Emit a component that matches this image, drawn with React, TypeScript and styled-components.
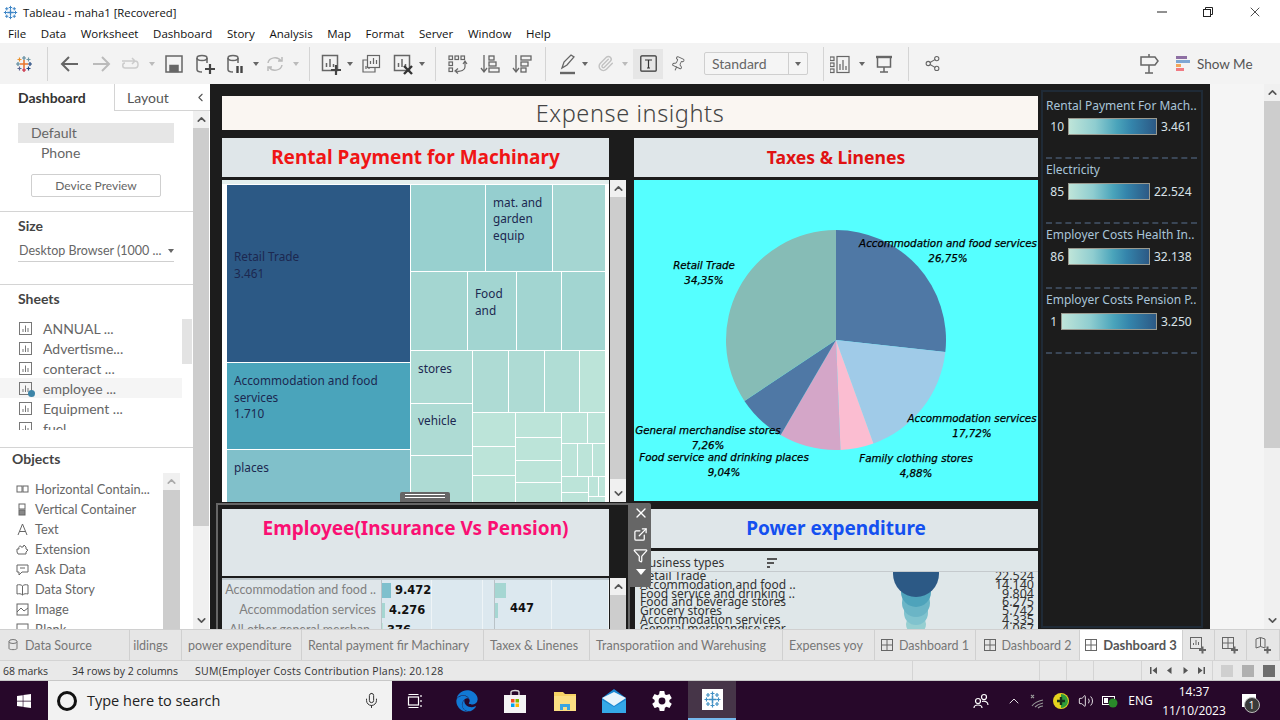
import React from "react";
import styled, { createGlobalStyle } from "styled-components";
import { FaEdge, FaWindows } from "react-icons/fa";
import { IoSettingsSharp } from "react-icons/io5";
import { ChevronUp, ChevronDown, ChevronLeft, ExternalLink, Filter, Mic, Paperclip, Pin, Share2, Volume2, X } from "lucide-react";

const UI = `"Lato", "Noto Sans", sans-serif`;
const SEGOE = `"Open Sans", "Noto Sans", sans-serif`;
const DASH = `"Noto Sans", "Open Sans", sans-serif`;

const Global = createGlobalStyle`
  html, body { margin: 0; padding: 0; background: #fff; }
  * { box-sizing: border-box; }
`;

const Page = styled.div`
  width: 1280px;
  height: 720px;
  display: flex;
  flex-direction: column;
  overflow: hidden;
  font-family: ${UI};
  color: #555;
`;

/* window chrome */
const TitleBar = styled.div`
  height: 24px;
  display: flex;
  align-items: center;
  background: #fff;
  font-family: ${SEGOE};
  font-size: 11.3px;
  color: #111;
  padding-left: 3px;
  gap: 5px;
`;
const WinButtons = styled.div`
  margin-left: auto;
  display: flex;
  height: 100%;
`;
const WinButton = styled.div<{ $w: number }>`
  width: ${(p) => p.$w}px;
  display: flex;
  align-items: center;
  justify-content: center;
  color: #222;
`;
const MenuBar = styled.div`
  height: 19px;
  display: flex;
  align-items: center;
  gap: 14.6px;
  padding-left: 8px;
  font-family: ${SEGOE};
  font-size: 11.5px;
  color: #111;
  background: #fff;
`;

/* toolbar */
const Toolbar = styled.div`
  height: 41px;
  display: flex;
  align-items: center;
  background: #f3f3f3;
`;
const Slot = styled.div<{ $w: number; $c?: string }>`
  flex: none;
  width: ${(p) => p.$w}px;
  height: 100%;
  display: flex;
  align-items: center;
  justify-content: center;
  color: ${(p) => p.$c || "#666"};
`;
const Sep = styled.div<{ $l?: number; $r?: number }>`
  flex: none;
  width: 1px;
  height: 34px;
  background: #d4d4d4;
  margin: 0 ${(p) => p.$r ?? 6}px 0 ${(p) => p.$l ?? 0}px;
`;
const Caret = styled.span<{ $c?: string; $s?: number }>`
  flex: none;
  width: 0;
  height: 0;
  border-left: ${(p) => p.$s ?? 3}px solid transparent;
  border-right: ${(p) => p.$s ?? 3}px solid transparent;
  border-top: ${(p) => (p.$s ?? 3) + 1}px solid ${(p) => p.$c || "#666"};
`;
const TBox = styled.div`
  flex: none;
  width: 30px;
  height: 30px;
  margin-left: 5px;
  background: #e6e6e6;
  display: flex;
  align-items: center;
  justify-content: center;
`;
const FitSelect = styled.div`
  flex: none;
  width: 104px;
  height: 23px;
  margin-left: 11px;
  display: flex;
  align-items: center;
  border: 1px solid #cfcfcf;
  border-radius: 2px;
  background: #f5f5f5;
  padding-left: 7px;
  font-size: 14px;
  color: #666;
`;
const FitCaret = styled.div`
  margin-left: auto;
  width: 19px;
  height: 100%;
  border-left: 1px solid #cfcfcf;
  display: flex;
  align-items: center;
  justify-content: center;
`;
const ShowMe = styled.div`
  display: flex;
  align-items: center;
  gap: 7px;
  margin-left: 16px;
  font-size: 13.5px;
  color: #555;
`;
const ShowBars = styled.div`
  display: flex;
  flex-direction: column;
  gap: 1px;
`;
const ShowBar = styled.div<{ $w: number; $c: string }>`
  height: 3px;
  width: ${(p) => p.$w}px;
  background: ${(p) => p.$c};
`;

/* main */
const Main = styled.div`
  height: 545px;
  display: flex;
  overflow: hidden;
`;
const Pane = styled.div`
  flex: none;
  width: 210px;
  background: #fff;
  display: flex;
  flex-direction: column;
`;
const PaneTabs = styled.div`
  height: 27px;
  flex: none;
  display: flex;
`;
const PaneTab = styled.div<{ $w: number; $active?: boolean }>`
  width: ${(p) => p.$w}px;
  display: flex;
  align-items: center;
  padding-left: ${(p) => (p.$active ? 18 : 12)}px;
  font-size: 14px;
  font-weight: ${(p) => (p.$active ? 700 : 400)};
  color: ${(p) => (p.$active ? "#333" : "#555")};
  border-left: ${(p) => (p.$active ? "none" : "1px solid #d4d4d4")};
  border-bottom: ${(p) => (p.$active ? "none" : "1px solid #d4d4d4")};
  gap: 25px;
`;
const PaneBody = styled.div`
  flex: 1;
  min-height: 0;
  display: flex;
`;
const PaneContent = styled.div`
  width: 193px;
  flex: none;
  display: flex;
  flex-direction: column;
`;
const Section = styled.div<{ $h: number }>`
  flex: none;
  height: ${(p) => p.$h}px;
  border-bottom: 1px solid #d4d4d4;
  overflow: hidden;
`;
const LastSection = styled(Section)`
  border-bottom: none;
`;
const Heading = styled.div<{ $left?: number; $top?: number }>`
  font-size: 14px;
  font-weight: 700;
  color: #444;
  line-height: 18px;
  padding: ${(p) => p.$top ?? 5}px 0 0 ${(p) => p.$left ?? 18}px;
`;
const DeviceList = styled.div`
  padding-top: 12px;
`;
const DeviceRow = styled.div<{ $on?: boolean; $indent: number }>`
  height: 20px;
  margin: 0 19px 0 18px;
  padding-left: ${(p) => p.$indent}px;
  line-height: 20px;
  font-size: 14px;
  color: #666;
  background: ${(p) => (p.$on ? "#e6e6e6" : "transparent")};
`;
const DeviceButton = styled.div`
  width: 130px;
  height: 23px;
  margin: 11px 0 0 31px;
  padding-bottom: 1px;
  border: 1px solid #cfcfcf;
  border-radius: 2px;
  font-size: 12px;
  color: #666;
  display: flex;
  align-items: center;
  justify-content: center;
`;
const SizeSelect = styled.div`
  width: 156px;
  height: 22px;
  margin: 5px 0 0 18px;
  padding-left: 1px;
  border-bottom: 1px solid #cfcfcf;
  display: flex;
  align-items: center;
  justify-content: space-between;
  font-size: 12.5px;
  white-space: nowrap;
  color: #666;
`;
const ListWrap = styled.div<{ $h: number; $m: number }>`
  height: ${(p) => p.$h}px;
  margin-top: ${(p) => p.$m}px;
  display: flex;
  overflow: hidden;
`;
const SheetList = styled.div`
  width: 182px;
`;
const SheetRow = styled.div<{ $on?: boolean }>`
  height: 20px;
  display: flex;
  align-items: center;
  padding-left: 19px;
  gap: 11px;
  font-size: 14px;
  color: #666;
  background: ${(p) => (p.$on ? "#f5f5f5" : "transparent")};
`;
const SheetThumb = styled.div`
  width: 10px;
  height: 45px;
  margin-top: 1px;
  background: #e3e3e3;
`;
const IconWrap = styled.span`
  position: relative;
  display: flex;
`;
const Check = styled.span`
  position: absolute;
  right: -3px;
  bottom: -2px;
  width: 7px;
  height: 7px;
  border-radius: 50%;
  background: #3d85a8;
`;
const ObjList = styled.div`
  width: 163px;
  padding-top: 6px;
`;
const ObjRow = styled.div`
  height: 20px;
  display: flex;
  align-items: center;
  padding-left: 16px;
  gap: 6px;
  font-size: 12.8px;
  color: #666;
  white-space: nowrap;
`;

const Track = styled.div<{ $w?: number }>`
  flex: none;
  width: ${(p) => p.$w ?? 16}px;
  height: 100%;
  display: flex;
  flex-direction: column;
  background: #f0f0f0;
`;
const Arrow = styled.div<{ $c?: string }>`
  flex: none;
  height: 17px;
  display: flex;
  align-items: center;
  justify-content: center;
  color: ${(p) => p.$c || "#555"};
`;
const Thumb = styled.div<{ $h: number }>`
  flex: none;
  height: ${(p) => p.$h}px;
  background: #cdcdcd;
`;
const TrackFill = styled.div`
  flex: 1;
`;

const Scroll = ({ thumb, width, faded, noDown }: { thumb: number; width?: number; faded?: boolean; noDown?: boolean }) => (
  <Track $w={width}>
    <Arrow $c={faded ? "#aaa" : "#555"}>
      <ChevronUp size={13} strokeWidth={3} />
    </Arrow>
    <Thumb $h={thumb} />
    <TrackFill />
    {!noDown && (
      <Arrow>
        <ChevronDown size={13} strokeWidth={3} />
      </Arrow>
    )}
  </Track>
);

/* dashboard canvas */
const Canvas = styled.div`
  flex: none;
  width: 1000px;
  height: 100%;
  background: #1c1c1c;
  display: flex;
  padding-left: 12px;
`;
const Board = styled.div`
  flex: none;
  width: 816px;
  padding-top: 12px;
  display: flex;
  flex-direction: column;
  gap: 8px;
`;
const BoardTitle = styled.div`
  flex: none;
  height: 34px;
  padding-bottom: 1px;
  background: #faf6f2;
  display: flex;
  align-items: center;
  justify-content: center;
  font-family: ${DASH};
  font-size: 23.5px;
  font-weight: 300;
  letter-spacing: 0.6px;
  color: #444;
`;
const BoardColumns = styled.div`
  display: grid;
  grid-template-columns: 404px 404px;
  column-gap: 8px;
`;
const Col = styled.div`
  display: flex;
  flex-direction: column;
`;
const CardTitle = styled.div<{ $c: string; $w: number; $h: number; $gap?: number; $size?: number }>`
  flex: none;
  width: ${(p) => p.$w}px;
  height: ${(p) => p.$h}px;
  margin-top: ${(p) => p.$gap ?? 0}px;
  padding-top: 7px;
  background: #dfe6e9;
  text-align: center;
  font-family: ${DASH};
  font-size: ${(p) => p.$size ?? 19}px;
  line-height: 25px;
  font-weight: 700;
  color: ${(p) => p.$c};
`;
const ChartRow = styled.div`
  flex: none;
  height: 322px;
  margin-top: 3px;
  display: flex;
  gap: 1px;
  position: relative;
`;
const TreeBox = styled.div`
  width: 387px;
  height: 322px;
  overflow: hidden;
  background: #fff;
`;
const TreeLabel = styled.text`
  font-family: ${DASH};
  font-size: 11.8px;
  fill: #1c2850;
`;
const PieBox = styled.div`
  margin-top: 3px;
  height: 321px;
  background: #55ffff;
`;
const PieLabel = styled.text`
  font-family: "DejaVu Sans", sans-serif;
  font-size: 10.3px;
  font-style: italic;
  text-anchor: middle;
  fill: #000;
  stroke: #000;
  stroke-width: 0.25px;
`;
const Handle = styled.div`
  position: absolute;
  left: 178px;
  bottom: 0;
  width: 50px;
  height: 10px;
  background: #666;
  border-radius: 2px 2px 0 0;
  padding: 2px 5px 0;
  z-index: 3;
`;
const HandleLine = styled.div`
  height: 1px;
  margin-bottom: 2px;
  background: #fff;
`;
const Selected = styled.div`
  margin-top: 7px;
  position: relative;
`;
const SelectFrame = styled.div`
  position: absolute;
  left: -6px;
  top: -6px;
  width: 414px;
  height: 200px;
  border: 2px solid #666;
  border-bottom: none;
  pointer-events: none;
`;
const SelectTools = styled.div`
  position: absolute;
  left: 408px;
  top: -6px;
  width: 21px;
  height: 84px;
  background: #666;
  border-radius: 0 2px 2px 0;
  color: #fff;
  display: flex;
  flex-direction: column;
  align-items: center;
  padding-top: 2px;
  gap: 6px;
  z-index: 3;
`;
const EmpBody = styled.div`
  margin-top: 2px;
  height: 51px;
  display: flex;
  gap: 1px;
`;
const EmpTable = styled.div`
  width: 387px;
  border-top: 2px solid #bcc6cb;
  overflow: hidden;
  background: #dce8ef;
`;
const EmpRow = styled.div`
  height: 20px;
  display: grid;
  grid-template-columns: 160px 50px 51px 12px 57px 57px;
`;
const EmpLabel = styled.div`
  background: #dfe6ea;
  border-right: 1px solid #b9c2c7;
  text-align: right;
  padding-right: 5px;
  font-size: 12.5px;
  line-height: 20px;
  color: #808080;
  white-space: nowrap;
  overflow: hidden;
`;
const EmpCell = styled.div<{ $strong?: boolean }>`
  border-right: 1px solid ${(p) => (p.$strong ? "#b9c2c7" : "#eef4f7")};
  display: flex;
  align-items: center;
  white-space: nowrap;
`;
const EmpBar = styled.div<{ $w: number; $c: string }>`
  flex: none;
  width: ${(p) => p.$w}px;
  height: 15px;
  background: ${(p) => p.$c};
`;
const EmpValue = styled.div<{ $gap: number; $up?: number }>`
  margin-left: ${(p) => p.$gap}px;
  margin-bottom: ${(p) => p.$up ?? 0}px;
  font-family: "DejaVu Sans", sans-serif;
  font-size: 11.5px;
  font-weight: 700;
  color: #111;
`;
const PowerTable = styled.div`
  margin-top: 3px;
  height: 78px;
  background: #dfe7e9;
  overflow: hidden;
  font-family: ${DASH};
  color: #333;
  border-left: 1px solid #1c1c1c;
`;
const PowerHead = styled.div`
  height: 21px;
  padding: 3px 0 0 6px;
  border-bottom: 1px solid #c5cacd;
  display: flex;
  align-items: center;
  font-size: 12px;
  gap: 43px;
`;
const SortIcon = styled.div`
  display: flex;
  flex-direction: column;
  gap: 2px;
`;
const SortLine = styled.div<{ $w: number }>`
  width: ${(p) => p.$w}px;
  height: 2px;
  background: #555;
`;
const PowerBody = styled.div`
  display: flex;
  height: 57px;
  overflow: hidden;
  padding: 0 4px 0 5px;
`;
const PowerLabels = styled.div`
  flex: none;
  width: 245px;
  font-size: 12px;
  line-height: 8.8px;
  white-space: nowrap;
`;
const PowerValues = styled.div`
  margin-left: auto;
  text-align: right;
  font-size: 12.5px;
  line-height: 8.8px;
`;
const BubbleSvg = styled.svg`
  flex: none;
  margin-left: 6px;
`;

/* legends */
const Legends = styled.div`
  flex: none;
  width: 162px;
  height: 538px;
  margin: 6px 0 0 3px;
  border: 2px solid #1f2a36;
  padding: 0 3px;
`;
const LegendName = styled.div`
  font-family: ${DASH};
  font-size: 12px;
  line-height: 17px;
  color: #a9c4d8;
  white-space: nowrap;
`;
const LegendRow = styled.div`
  display: flex;
  align-items: center;
  margin-top: 5px;
  height: 17px;
  font-family: ${DASH};
  font-size: 12px;
  color: #d8e2e8;
`;
const LegendItem = styled.div`
  height: 65px;
  margin-right: 1px;
  border-bottom: 2px dashed #3a4656;
  padding-top: 2px;
  &:first-child {
    height: 67px;
    padding-top: 5px;
  }
  &:first-child ${LegendRow} {
    margin-top: 4px;
  }
`;
const LegendMin = styled.div<{ $w: number }>`
  width: ${(p) => p.$w}px;
  text-align: right;
  flex: none;
`;
const Ramp = styled.div<{ $w: number }>`
  width: ${(p) => p.$w}px;
  height: 17px;
  margin: 0 4px;
  border: 1px solid #9a9a90;
  background: linear-gradient(90deg, #bfe5d9, #8fcdd0 30%, #4aa4bb 55%, #3484ab 72%, #2c5985);
  flex: none;
`;

const RightGap = styled.div`
  flex: none;
  width: 54px;
  background: #f5f5f5;
`;

/* tabs + status */
const Tabs = styled.div`
  height: 31px;
  flex: none;
  display: flex;
  background: #e6e6e6;
  border-top: 1px solid #d0d0d0;
`;
const Tab = styled.div<{ $w: number; $on?: boolean; $align?: string; $pad?: number }>`
  flex: none;
  width: ${(p) => p.$w}px;
  display: flex;
  align-items: center;
  justify-content: ${(p) => p.$align || "center"};
  padding: 0 ${(p) => p.$pad ?? 0}px;
  gap: 6px;
  border-right: 1px solid #d0d0d0;
  font-size: ${(p) => (p.$on ? 13 : 12.5)}px;
  font-weight: ${(p) => (p.$on ? 700 : 400)};
  color: ${(p) => (p.$on ? "#555" : "#777")};
  background: ${(p) => (p.$on ? "#fff" : "transparent")};
  white-space: nowrap;
  overflow: hidden;
`;
const Status = styled.div`
  height: 21px;
  flex: none;
  display: flex;
  background: #e9e9e9;
  border-top: 1px solid #d4d4d4;
  border-bottom: 1px solid #c8c8c8;
  font-family: ${SEGOE};
  font-size: 10.5px;
  color: #333;
`;
const StatusCell = styled.div<{ $w: number; $gap?: number; $pad?: number; $last?: boolean }>`
  flex: none;
  width: ${(p) => p.$w}px;
  display: flex;
  align-items: center;
  border-right: ${(p) => (p.$last ? "none" : "1px solid #d4d4d4")};
  padding-left: ${(p) => p.$pad ?? 3}px;
  gap: ${(p) => p.$gap ?? 0}px;
  white-space: nowrap;
`;
const StatusSum = styled.span`
  margin-left: -7px;
  letter-spacing: 0.25px;
`;
const NavBtn = styled.span`
  display: flex;
  justify-content: center;
  width: 16px;
`;
const ViewBox = styled.div<{ $s: number; $c: string }>`
  width: ${(p) => p.$s}px;
  height: ${(p) => p.$s}px;
  background: ${(p) => p.$c};
`;

/* taskbar */
const Taskbar = styled.div`
  height: 39px;
  flex: none;
  display: flex;
  align-items: center;
  background: #27082a;
  color: #fff;
`;
const TaskSlot = styled.div<{ $w: number; $on?: boolean; $ml?: number }>`
  flex: none;
  width: ${(p) => p.$w}px;
  margin-left: ${(p) => p.$ml ?? 0}px;
  height: 100%;
  display: flex;
  align-items: center;
  justify-content: center;
  background: ${(p) => (p.$on ? "#463548" : "transparent")};
  border-bottom: ${(p) => (p.$on ? "2px solid #76b9ed" : "none")};
`;
const SearchBox = styled.div`
  flex: none;
  width: 344px;
  height: 100%;
  background: #f2f2f2;
  display: flex;
  align-items: center;
  padding: 0 12px 0 9px;
  gap: 10px;
  font-family: ${SEGOE};
  font-size: 14.5px;
  color: #222;
`;
const CortanaRing = styled.div`
  width: 20px;
  height: 20px;
  border-radius: 50%;
  border: 3px solid #111;
`;
const MicSlot = styled.div`
  margin-left: auto;
  display: flex;
  color: #333;
`;
const TrayText = styled.div`
  flex: none;
  font-family: ${SEGOE};
  font-size: 12px;
  color: #fff;
  text-align: center;
  line-height: 19px;
`;
const TraySpacer = styled.div`
  flex: 1;
`;
const NotifyBadge = styled.div`
  position: absolute;
  right: -4px;
  bottom: -6px;
  width: 16px;
  height: 16px;
  border-radius: 50%;
  background: #3a3a3a;
  border: 1px solid #bbb;
  font-size: 10px;
  line-height: 14px;
  text-align: center;
  color: #fff;
  font-family: ${SEGOE};
`;
const NotifyIcon = styled.div`
  position: relative;
  width: 14px;
  height: 13px;
  background: #fff;
`;

/* drawings */
const Ic = ({ s = 22, c = "currentColor", w = 1.5, children }: { s?: number; c?: string; w?: number; children: React.ReactNode }) => (
  <svg width={s} height={s} viewBox={`0 0 ${s} ${s}`} fill="none" stroke={c} strokeWidth={w}>
    {children}
  </svg>
);

const TableauLogo = ({ c, s = 18 }: { c?: string; s?: number }) => {
  const plus = (x: number, y: number, r: number, color: string, k: string) => (
    <path key={k} d={`M${x - r} ${y}H${x + r}M${x} ${y - r}V${y + r}`} stroke={c || color} strokeWidth={r > 2 ? 1.6 : 1.2} />
  );
  return (
    <svg width={s} height={s} viewBox="0 0 18 18" fill="none">
      {plus(9, 9, 4, "#e8762d", "a")}
      {plus(9, 3, 2, "#5b879b", "b")}
      {plus(9, 15, 2, "#c72037", "c")}
      {plus(3, 9, 2, "#59879b", "d")}
      {plus(15, 9, 2, "#1f457e", "e")}
      {plus(4.5, 4.5, 2, "#eb912b", "f")}
      {plus(13.5, 4.5, 2, "#7099a6", "g")}
      {plus(4.5, 13.5, 2, "#5c6692", "h")}
      {plus(13.5, 13.5, 2, "#1f457e", "i")}
    </svg>
  );
};

const Cylinder = ({ children }: { children: React.ReactNode }) => (
  <Ic>
    <ellipse cx="8" cy="5" rx="5" ry="2.5" />
    <path d="M3 5V16.5C3 18 5 19 8 19M13 5V10" />
    {children}
  </Ic>
);

const ChartSquare = ({ children }: { children?: React.ReactNode }) => (
  <Ic>
    <rect x="2.5" y="2.5" width="15" height="15" />
    <path d="M6.5 14V10M10 14V6M13.5 14V11" />
    {children}
  </Ic>
);

const SheetIcon = () => (
  <Ic s={13} w={1} c="#777">
    <rect x=".5" y=".5" width="12" height="12" />
    <path d="M4 10V7M6.5 10V3.5M9 10V6" />
  </Ic>
);

const GridIcon = () => (
  <Ic s={12} w={1} c="#666">
    <rect x=".5" y=".5" width="11" height="11" />
    <path d="M6 .5V11.5M.5 6H11.5" />
  </Ic>
);

const NavIcon = ({ d }: { d: string }) => (
  <svg width="9" height="9" viewBox="0 0 9 9" fill="#555">
    <path d={d} />
  </svg>
);

const objIcons: React.ReactNode[] = [
  <><rect x="1" y="3" width="5" height="6" /><rect x="7" y="3" width="5" height="6" /></>,
  <><rect x="3" y="1" width="6" height="5" /><rect x="3" y="7" width="6" height="5" fill="#888" /></>,
  <path d="M2 12L6.5 1L11 12M3.5 8.5H9.5" />,
  <path d="M1 6H3C2 3 5 2 5 4H7L8 2L10 4V6L12 7L10 9V11H2L1 9Z" />,
  <path d="M1 2H12V9H6L3 12V9H1ZM4 5H9" />,
  <path d="M6.5 3C5 1.5 3 1.5 1 2V11C3 10.5 5 10.5 6.5 12C8 10.5 10 10.5 12 11V2C10 1.5 8 1.5 6.5 3V12" />,
  <><rect x="1" y="1" width="11" height="11" /><path d="M1 9L5 5L8 8L12 5" /></>,
  <rect x="1" y="1" width="11" height="11" />,
];

const objects = ["Horizontal Contain...", "Vertical Container", "Text", "Extension", "Ask Data", "Data Story", "Image", "Blank"];
const sheets = ["ANNUAL ...", "Advertisme...", "conteract ...", "employee ...", "Equipment ...", "fuel"];

const rects: [number, number, number, number, string][] = [
  [227, 185, 410, 362, "#2c5985"],
  [227, 363, 410, 449, "#4aa4bb"],
  [227, 450, 410, 503, "#80c0ca"],
  [411, 185, 485, 271, "#98d0cf"],
  [486, 185, 552, 271, "#95cecf"],
  [553, 185, 605, 271, "#a5d6d2"],
  [411, 272, 467, 350, "#a4d6d1"],
  [468, 272, 516, 350, "#a2d5d1"],
  [517, 272, 561, 350, "#a2d5d1"],
  [562, 272, 605, 350, "#a2d5d1"],
  [411, 351, 472, 403, "#aedbd4"],
  [411, 404, 472, 455, "#aedbd4"],
  [411, 456, 472, 503, "#aedbd4"],
  [473, 351, 508, 412, "#aedbd4"],
  [509, 351, 544, 412, "#aedbd4"],
  [545, 351, 579, 412, "#b0ddd5"],
  [580, 351, 605, 412, "#bce4d9"],
  [473, 413, 515, 446, "#bce4d9"],
  [473, 447, 515, 475, "#bce4d9"],
  [473, 476, 515, 503, "#bce4d9"],
  [516, 413, 561, 437, "#bce4d9"],
  [516, 438, 561, 460, "#bce4d9"],
  [516, 461, 561, 482, "#bce4d9"],
  [516, 483, 561, 503, "#bce4d9"],
  [562, 413, 587, 443, "#bce4d9"],
  [588, 413, 605, 443, "#bce4d9"],
  [562, 444, 577, 476, "#bce4d9"],
  [578, 444, 592, 476, "#bce4d9"],
  [593, 444, 605, 476, "#bce4d9"],
  [562, 477, 588, 492, "#bce4d9"],
  [589, 477, 598, 496, "#bce4d9"],
  [599, 477, 605, 496, "#bce4d9"],
  [562, 493, 588, 503, "#bce4d9"],
  [589, 497, 605, 503, "#bce4d9"],
];

const treeText: [number, number, string][] = [
  [234, 261, "Retail Trade"],
  [234, 278, "3.461"],
  [234, 385, "Accommodation and food"],
  [234, 402, "services"],
  [234, 418, "1.710"],
  [234, 472, "places"],
  [493, 207, "mat. and"],
  [493, 223, "garden"],
  [493, 240, "equip"],
  [475, 298, "Food"],
  [475, 315, "and"],
  [418, 373, "stores"],
  [418, 425, "vehicle"],
];

const Treemap = () => (
  <svg width="387" height="322" viewBox="222 180 387 322">
    <rect x="222" y="180" width="387" height="4" fill="#e4efee" />
    {rects.map(([x1, y1, x2, y2, c], i) => (
      <rect key={i} x={x1} y={y1} width={x2 - x1} height={y2 - y1} fill={c} />
    ))}
    {treeText.map(([x, y, t]) => (
      <TreeLabel key={t + y} x={x} y={y}>{t}</TreeLabel>
    ))}
  </svg>
);

const slices: [number, string][] = [
  [26.75, "#4f78a5"],
  [17.72, "#a0cbe8"],
  [4.88, "#fbbdd1"],
  [9.04, "#d4a6c8"],
  [7.26, "#4f78a5"],
  [34.35, "#86bcb6"],
];

const pieLabels: [number, number, string, string][] = [
  [948, 247, "Accommodation and food services", "26,75%"],
  [704, 269, "Retail Trade", "34,35%"],
  [972, 422, "Accommodation services", "17,72%"],
  [916, 462, "Family clothing stores", "4,88%"],
  [708, 434, "General merchandise stores", "7,26%"],
  [724, 461, "Food service and drinking places", "9,04%"],
];

const Pie = () => {
  let acc = 0;
  const cx = 202;
  const cy = 160;
  const r = 110;
  return (
    <svg width="404" height="321" viewBox="0 0 404 321">
      {slices.map(([p, c]) => {
        const a0 = (acc / 100) * Math.PI * 2;
        acc += p;
        const a1 = (acc / 100) * Math.PI * 2;
        const d = `M${cx} ${cy}L${cx + r * Math.sin(a0)} ${cy - r * Math.cos(a0)}A${r} ${r} 0 ${p > 50 ? 1 : 0} 1 ${cx + r * Math.sin(a1)} ${cy - r * Math.cos(a1)}Z`;
        return <path key={p} d={d} fill={c} />;
      })}
      {pieLabels.map(([x, y, a, b]) => (
        <React.Fragment key={a}>
          <PieLabel x={x - 634} y={y - 180}>{a}</PieLabel>
          <PieLabel x={x - 634} y={y - 165}>{b}</PieLabel>
        </React.Fragment>
      ))}
    </svg>
  );
};

const bubbles: [number, number, string][] = [
  [62, 10, "#a8d8d3"],
  [52, 10, "#96cfd1"],
  [41, 12, "#80c3ce"],
  [31, 14, "#6bb5c6"],
  [20, 15, "#4ea3bb"],
  [2, 23, "#2c5985"],
];

const powerRows = [
  "Retail Trade",
  "Accommodation and food ..",
  "Food service and drinking ..",
  "Food and beverage stores",
  "Grocery stores",
  "Accommodation services",
  "General merchandise stor..",
];
const powerVals = ["22.524", "14.140", "9.804", "6.275", "5.742", "4.335", "4.067"];

const legends = [
  { name: "Rental Payment For Mach..", min: "10", max: "3.461", w: 89, minW: 18 },
  { name: "Electricity", min: "85", max: "22.524", w: 82, minW: 18 },
  { name: "Employer Costs Health In..", min: "86", max: "32.138", w: 82, minW: 18 },
  { name: "Employer Costs Pension P..", min: "1", max: "3.250", w: 96, minW: 11 },
];

export default function App() {
  return (
    <Page>
      <Global />
      <TitleBar>
        <TableauLogo c="#3d85c6" s={15} />
        Tableau - maha1 [Recovered]
        <WinButtons>
          <WinButton $w={46}>
            <Ic s={12} w={1} c="#222"><path d="M1 6H11" /></Ic>
          </WinButton>
          <WinButton $w={45}>
            <Ic s={12} w={1} c="#222"><rect x="1.5" y="3.5" width="7" height="7" /><path d="M3.5 3.5V1.5H10.5V8.5H8.5" /></Ic>
          </WinButton>
          <WinButton $w={50}>
            <X size={16} strokeWidth={1.2} />
          </WinButton>
        </WinButtons>
      </TitleBar>
      <MenuBar>
        {["File", "Data", "Worksheet", "Dashboard", "Story", "Analysis", "Map", "Format", "Server", "Window", "Help"].map((m) => (
          <span key={m}>{m}</span>
        ))}
      </MenuBar>
      <Toolbar>
        <Slot $w={47}><TableauLogo s={18} /></Slot>
        <Sep $r={8} />
        <Slot $w={28}><Ic w={2}><path d="M3 11H19M10 4L3 11L10 18" /></Ic></Slot>
        <Slot $w={34} $c="#bbb"><Ic w={2}><path d="M3 11H19M12 4L19 11L12 18" /></Ic></Slot>
        <Slot $w={26} $c="#ccc"><Ic><path d="M2 8H15C19 8 19 15 15 15H5C2 15 2 10 5 10M12 5L15 8L12 11" /></Ic></Slot>
        <Slot $w={16}><Caret $c="#bbb" /></Slot>
        <Slot $w={28}><Ic><rect x="3" y="3" width="16" height="16" /><rect x="7" y="12.5" width="8" height="6" fill="#666" /></Ic></Slot>
        <Slot $w={34}><Cylinder><path d="M11 16H21M16 11V21" strokeWidth="2.2" stroke="#444" /></Cylinder></Slot>
        <Slot $w={28}><Cylinder><path d="M12.5 13V20M16.5 13V20" strokeWidth="2.4" stroke="#444" /></Cylinder></Slot>
        <Slot $w={12}><Caret /></Slot>
        <Slot $w={26} $c="#bbb"><Ic><path d="M4 10C5 4 14 3 17 8M18 12C17 18 8 19 5 14M14 8H18V4M8 14H4V18" /></Ic></Slot>
        <Slot $w={16}><Caret $c="#bbb" /></Slot>
        <Sep $l={5} />
        <Slot $w={30}><ChartSquare><path d="M11 17H21M16 12V22" strokeWidth="2.2" stroke="#444" /></ChartSquare></Slot>
        <Slot $w={8}><Caret /></Slot>
        <Slot $w={34}><Ic w={1.2}><rect x="7.5" y="2.5" width="12" height="12" fill="#f3f3f3" /><path d="M10.5 11V8M13.5 11V5M16.5 11V7" /><path d="M7 7H3V19H15V15M6 16V13M9 16V15" /></Ic></Slot>
        <Slot $w={30}><ChartSquare><path d="M12 13L20 21M20 13L12 21" strokeWidth="2.4" stroke="#333" /></ChartSquare></Slot>
        <Slot $w={8}><Caret /></Slot>
        <Sep $l={9} />
        <Slot $w={30}><Ic w={1.2}><rect x="3" y="3" width="3.5" height="3.5" /><rect x="9" y="3" width="3.5" height="3.5" /><rect x="15" y="3" width="3.5" height="3.5" /><rect x="3" y="9" width="3.5" height="3.5" /><rect x="3" y="15" width="3.5" height="3.5" /><path d="M19 9V14C19 17 15 19 10 18M12 15.5L9 18L12 20.5M17 11L19 8L21 11" /></Ic></Slot>
        <Slot $w={36}><Ic w={1.3}><path d="M5 2V19M2 15L5 19L8 15" /><rect x="10" y="3" width="5" height="4" /><rect x="10" y="9" width="7" height="4" /><rect x="10" y="15" width="10" height="4" /></Ic></Slot>
        <Slot $w={28}><Ic w={1.3}><path d="M5 2V19M2 15L5 19L8 15" /><rect x="10" y="3" width="10" height="4" /><rect x="10" y="9" width="7" height="4" /><rect x="10" y="15" width="5" height="4" /></Ic></Slot>
        <Sep $l={9} />
        <Slot $w={30}><Ic w={1.3}><path d="M6 15L8 9L15 2L18 4L11 12ZM4 20H19" /><path d="M4 20H19" strokeWidth="2.4" /></Ic></Slot>
        <Slot $w={6}><Caret /></Slot>
        <Slot $w={34} $c="#c2c2c2"><Paperclip size={17} /></Slot>
        <Slot $w={6}><Caret $c="#bbb" /></Slot>
        <TBox>
          <Ic s={17} w={1.2} c="#333"><rect x=".8" y=".8" width="15.4" height="15.4" rx="1" /><path d="M5 5H12M8.5 5V13M7 13H10" /></Ic>
        </TBox>
        <Slot $w={30}><Pin size={16} strokeWidth={1.4} style={{ transform: "rotate(25deg)" }} /></Slot>
        <FitSelect>
          Standard
          <FitCaret><Caret /></FitCaret>
        </FitSelect>
        <Sep $l={15} $r={0} />
        <Slot $w={31}><Ic s={20} w={1.2}><rect x="0" y="3" width="4" height="3.5" /><rect x="0" y="9" width="4" height="3.5" /><rect x="0" y="15" width="4" height="3.5" /><rect x="7" y="2.5" width="12" height="16" /><path d="M10 16V10M13 16V6M16 16V12" /></Ic></Slot>
        <Slot $w={14}><Caret /></Slot>
        <Slot $w={30}><Ic><path d="M3 4H19" strokeWidth="2.4" /><path d="M4.5 4V14H17.5V4M11 14V19M7 19H15" /></Ic></Slot>
        <Sep $l={9} $r={8} />
        <Slot $w={30}><Share2 size={17} strokeWidth={1.5} /></Slot>
        <Slot $w={191}><span /></Slot>
        <Slot $w={22}><Ic><path d="M11 1V4M3 4H17L20 8L17 12H3ZM11 12V20M7 20H15" /></Ic></Slot>
        <ShowMe>
          <ShowBars>
            <ShowBar $w={11} $c="#8e6fa3" />
            <ShowBar $w={14} $c="#7ea6d3" />
            <ShowBar $w={5} $c="#f2a65a" />
            <ShowBar $w={8} $c="#f07a83" />
          </ShowBars>
          Show Me
        </ShowMe>
      </Toolbar>
      <Main>
        <Pane>
          <PaneTabs>
            <PaneTab $w={114} $active>Dashboard</PaneTab>
            <PaneTab $w={96}>
              Layout
              <ChevronLeft size={13} />
            </PaneTab>
          </PaneTabs>
          <PaneBody>
            <PaneContent>
              <Section $h={101}>
                <DeviceList>
                  <DeviceRow $on $indent={13}>Default</DeviceRow>
                  <DeviceRow $indent={23}>Phone</DeviceRow>
                </DeviceList>
                <DeviceButton>Device Preview</DeviceButton>
              </Section>
              <Section $h={73}>
                <Heading>Size</Heading>
                <SizeSelect>
                  Desktop Browser (1000 ...
                  <Caret />
                </SizeSelect>
              </Section>
              <Section $h={163}>
                <Heading>Sheets</Heading>
                <ListWrap $h={112} $m={10}>
                  <SheetList>
                    {sheets.map((s) => (
                      <SheetRow key={s} $on={s.startsWith("employee")}>
                        <IconWrap>
                          <SheetIcon />
                          {s.startsWith("employee") && <Check />}
                        </IconWrap>
                        {s}
                      </SheetRow>
                    ))}
                  </SheetList>
                  <SheetThumb />
                </ListWrap>
              </Section>
              <LastSection $h={181}>
                <Heading $left={12} $top={2}>Objects</Heading>
                <ListWrap $h={156} $m={5}>
                  <ObjList>
                    {objects.map((o, i) => (
                      <ObjRow key={o}>
                        <Ic s={13} w={1} c="#666">{objIcons[i]}</Ic>
                        {o}
                      </ObjRow>
                    ))}
                  </ObjList>
                  <Scroll thumb={139} width={17} faded noDown />
                </ListWrap>
              </LastSection>
            </PaneContent>
            <Scroll thumb={398} faded={false} />
          </PaneBody>
        </Pane>
        <Canvas>
          <Board>
            <BoardTitle>Expense insights</BoardTitle>
            <BoardColumns>
              <Col>
                <CardTitle $c="#f01515" $w={387} $h={39}>Rental Payment for Machinary</CardTitle>
                <ChartRow>
                  <TreeBox><Treemap /></TreeBox>
                  <Scroll thumb={282} />
                  <Handle><HandleLine /><HandleLine /></Handle>
                </ChartRow>
                <Selected>
                  <SelectFrame />
                  <SelectTools>
                    <X size={16} />
                    <ExternalLink size={15} />
                    <Filter size={15} />
                    <Caret $c="#fff" $s={5} />
                  </SelectTools>
                  <CardTitle $c="#fa0f73" $w={387} $h={67}>Employee(Insurance Vs Pension)</CardTitle>
                  <EmpBody>
                    <EmpTable>
                      <EmpRow>
                        <EmpLabel>Accommodation and food ..</EmpLabel>
                        <EmpCell><EmpBar $w={9} $c="#7fc0cd" /><EmpValue $gap={4}>9.472</EmpValue></EmpCell>
                        <EmpCell />
                        <EmpCell $strong />
                        <EmpCell><EmpBar $w={11} $c="#a5d6d2" /></EmpCell>
                        <EmpCell />
                      </EmpRow>
                      <EmpRow>
                        <EmpLabel>Accommodation services</EmpLabel>
                        <EmpCell><EmpBar $w={3} $c="#a5d6d2" /><EmpValue $gap={4}>4.276</EmpValue></EmpCell>
                        <EmpCell />
                        <EmpCell $strong />
                        <EmpCell><EmpBar $w={3} $c="#a5d6d2" /><EmpValue $gap={12} $up={5}>447</EmpValue></EmpCell>
                        <EmpCell />
                      </EmpRow>
                      <EmpRow>
                        <EmpLabel>All other general merchan..</EmpLabel>
                        <EmpCell><EmpBar $w={1} $c="#bce4d9" /><EmpValue $gap={4}>376</EmpValue></EmpCell>
                        <EmpCell />
                        <EmpCell $strong />
                        <EmpCell />
                        <EmpCell />
                      </EmpRow>
                    </EmpTable>
                    <Scroll thumb={60} noDown />
                  </EmpBody>
                </Selected>
              </Col>
              <Col>
                <CardTitle $c="#e01212" $w={404} $h={39} $size={17.6}>Taxes &amp; Linenes</CardTitle>
                <PieBox><Pie /></PieBox>
                <CardTitle $c="#1450f0" $w={404} $h={39} $gap={8}>Power expenditure</CardTitle>
                <PowerTable>
                  <PowerHead>
                    Business types
                    <SortIcon>
                      <SortLine $w={10} />
                      <SortLine $w={7} />
                      <SortLine $w={3} />
                    </SortIcon>
                  </PowerHead>
                  <PowerBody>
                    <PowerLabels>
                      {powerRows.map((r) => <div key={r}>{r}</div>)}
                    </PowerLabels>
                    <BubbleSvg width="50" height="57" viewBox="-25 0 50 57">
                      {bubbles.map(([y, r, c]) => <circle key={c} cx={0} cy={y} r={r} fill={c} />)}
                    </BubbleSvg>
                    <PowerValues>
                      {powerVals.map((v) => <div key={v}>{v}</div>)}
                    </PowerValues>
                  </PowerBody>
                </PowerTable>
              </Col>
            </BoardColumns>
          </Board>
          <Legends>
            {legends.map((l) => (
              <LegendItem key={l.name}>
                <LegendName>{l.name}</LegendName>
                <LegendRow>
                  <LegendMin $w={l.minW}>{l.min}</LegendMin>
                  <Ramp $w={l.w} />
                  {l.max}
                </LegendRow>
              </LegendItem>
            ))}
          </Legends>
        </Canvas>
        <RightGap />
        <Scroll thumb={347} />
      </Main>
      <Tabs>
        <Tab $w={130} $align="flex-start" $pad={7}>
          <Ic s={12} w={1} c="#777"><ellipse cx="6" cy="2.5" rx="4" ry="2" /><path d="M2 2.5V9.5C2 11 10 11 10 9.5V2.5" /></Ic>
          Data Source
        </Tab>
        <Tab $w={52} $align="flex-end" $pad={13}>ildings</Tab>
        <Tab $w={120} $align="flex-start" $pad={6}>power expenditure</Tab>
        <Tab $w={182} $align="flex-start" $pad={6}>Rental payment fir Machinary</Tab>
        <Tab $w={106} $align="flex-start" $pad={6}>Taxex &amp; Linenes</Tab>
        <Tab $w={193} $align="flex-start" $pad={6}>Transporatiion and Warehusing</Tab>
        <Tab $w={92} $align="flex-start" $pad={6}>Expenses yoy</Tab>
        <Tab $w={101}><GridIcon />Dashboard 1</Tab>
        <Tab $w={104}><GridIcon />Dashboard 2</Tab>
        <Tab $w={103} $on><GridIcon />Dashboard 3</Tab>
        <Tab $w={32}><Ic s={17} w={1} c="#666"><rect x=".5" y=".5" width="11" height="11" /><path d="M3.5 8V6M6 8V3M8.5 8V5" /><path d="M9 13H16M12.5 9.5V16.5" strokeWidth="2" /></Ic></Tab>
        <Tab $w={32}><Ic s={17} w={1} c="#666"><rect x=".5" y=".5" width="11" height="11" /><path d="M6 .5V11.5M.5 6H11.5" /><path d="M9 13H16M12.5 9.5V16.5" strokeWidth="2" /></Ic></Tab>
        <Tab $w={33}><Ic s={17} w={1} c="#666"><path d="M1 2L5.5 .5L10 2V11L5.5 9.5L1 11ZM5.5 .5V9.5" /><path d="M9 13H16M12.5 9.5V16.5" strokeWidth="2" /></Ic></Tab>
      </Tabs>
      <Status>
        <StatusCell $w={913} $gap={24}>
          <span>68 marks</span>
          <span>34 rows by 2 columns</span>
          <StatusSum>SUM(Employer Costs Contribution Plans): 20.128</StatusSum>
        </StatusCell>
        <StatusCell $w={127} />
        <StatusCell $w={27} />
        <StatusCell $w={27} />
        <StatusCell $w={48} />
        <StatusCell $w={71}>
          <NavBtn><NavIcon d="M1 1H2.5V8H1ZM8 1V8L3.5 4.5Z" /></NavBtn>
          <NavBtn><NavIcon d="M6.5 1V8L2 4.5Z" /></NavBtn>
          <NavBtn><NavIcon d="M2.5 1V8L7 4.5Z" /></NavBtn>
          <NavBtn><NavIcon d="M1 1V8L5.5 4.5ZM6.5 1H8V8H6.5Z" /></NavBtn>
        </StatusCell>
        <StatusCell $w={67} $gap={9} $pad={8} $last>
          <ViewBox $s={12} $c="#cfcfcf" />
          <ViewBox $s={12} $c="#b0b0b0" />
          <ViewBox $s={12} $c="#6e6e6e" />
        </StatusCell>
      </Status>
      <Taskbar>
        <TaskSlot $w={48}><FaWindows size={16} /></TaskSlot>
        <SearchBox>
          <CortanaRing />
          Type here to search
          <MicSlot><Mic size={17} strokeWidth={1.4} /></MicSlot>
        </SearchBox>
        <TaskSlot $w={46}>
          <Ic s={16} w={1.2} c="#fff"><rect x="1.5" y="4" width="10" height="8" /><path d="M1.5 1.5H11.5M1.5 14.5H11.5M14 2V4M14 7V9M14 12V14" /></Ic>
        </TaskSlot>
        <TaskSlot $w={48} $ml={5}><FaEdge size={22} color="#1178d4" /></TaskSlot>
        <TaskSlot $w={48}>
          <svg width="22" height="24" viewBox="0 0 22 24">
            <path d="M7 6V3C7 1 15 1 15 3V6" fill="none" stroke="#ddd" strokeWidth="1.4" />
            <rect x="0" y="6" width="22" height="18" fill="#f4f4f4" />
            <rect x="7" y="10" width="3.5" height="3.5" fill="#f25022" />
            <rect x="11.5" y="10" width="3.5" height="3.5" fill="#7fba00" />
            <rect x="7" y="14.5" width="3.5" height="3.5" fill="#00a4ef" />
            <rect x="11.5" y="14.5" width="3.5" height="3.5" fill="#ffb900" />
          </svg>
        </TaskSlot>
        <TaskSlot $w={48} $ml={2}>
          <svg width="22" height="20" viewBox="0 0 22 20">
            <path d="M0 1H9L11 3H22V20H0Z" fill="#f6d365" />
            <rect x="0" y="5" width="22" height="15" fill="#fbdf83" />
            <path d="M6 19V13H16V19H13V16H9V19Z" fill="#3aa5e0" />
          </svg>
        </TaskSlot>
        <TaskSlot $w={48} $ml={1}>
          <svg width="24" height="24" viewBox="0 0 24 24">
            <path d="M12 0L24 9V24H0V9Z" fill="#1a86d0" />
            <path d="M0 9L12 17L24 9L12 3Z" fill="#e8f4fb" />
            <path d="M0 24V11L12 18L24 11V24Z" fill="#35a8e8" />
          </svg>
        </TaskSlot>
        <TaskSlot $w={48}><IoSettingsSharp size={22} /></TaskSlot>
        <TaskSlot $w={48} $on $ml={2}>
          <svg width="21" height="21" viewBox="0 0 21 21">
            <rect width="21" height="21" fill="#fff" />
            <g transform="translate(1.5 1.5)"><TableauLogo c="#3f8fc4" s={18} /></g>
          </svg>
        </TaskSlot>
        <TraySpacer />
        <TaskSlot $w={24}>
          <Ic s={18} w={1.2} c="#fff"><circle cx="6" cy="9" r="2.5" /><circle cx="12" cy="5" r="2.5" /><path d="M2 16C2 12 10 12 10 16M10 9.5C13 8.5 16 10 16 13" /></Ic>
        </TaskSlot>
        <TaskSlot $w={9} />
        <TaskSlot $w={24}><ChevronUp size={16} strokeWidth={1.3} /></TaskSlot>
        <TaskSlot $w={22}>
          <Ic s={16} w={1.1} c="#999"><path d="M3 13C5 10 9 8 14 7M6 14C7 13 10 11 14 10M9 15C10 14 12 13 14 13M2 2L5 5M5 2L2 5" /></Ic>
        </TaskSlot>
        <TaskSlot $w={26}>
          <svg width="16" height="16" viewBox="0 0 16 16">
            <circle cx="8" cy="8" r="8" fill="#e6d21e" />
            <path d="M8 1A7 7 0 0 1 8 15Z" fill="#2e9d3a" />
            <path d="M8 4V12M4 8H12" stroke="#17331a" strokeWidth="2.4" />
          </svg>
        </TaskSlot>
        <TaskSlot $w={24}><Volume2 size={16} strokeWidth={1.3} /></TaskSlot>
        <TaskSlot $w={24}>
          <svg width="16" height="14" viewBox="0 0 16 14">
            <rect x=".5" y="2.5" width="12" height="8" fill="none" stroke="#fff" />
            <rect x="2" y="4" width="4" height="5" fill="#fff" />
            <circle cx="11" cy="9" r="4.5" fill="#2a8a2a" />
          </svg>
        </TaskSlot>
        <TaskSlot $w={37}><TrayText>ENG</TrayText></TaskSlot>
        <TaskSlot $w={70}>
          <TrayText>14:37<br />11/10/2023</TrayText>
        </TaskSlot>
        <TaskSlot $w={39}>
          <NotifyIcon><NotifyBadge>1</NotifyBadge></NotifyIcon>
        </TaskSlot>
        <TaskSlot $w={12} />
      </Taskbar>
    </Page>
  );
}
